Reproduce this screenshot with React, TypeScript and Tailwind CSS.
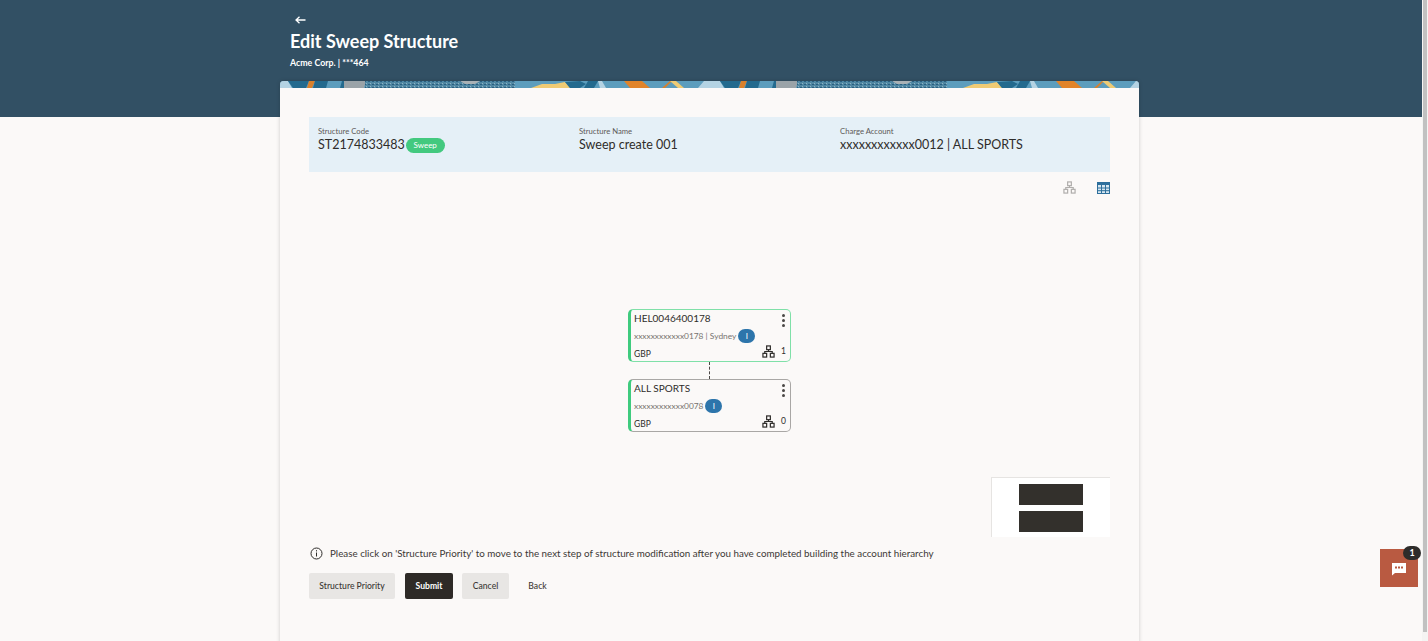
const font = { fontFamily: 'Lato, "Noto Sans", sans-serif' };

function Strip() {
  return (
    <svg className="block w-full h-[7px]" viewBox="0 0 859 7" preserveAspectRatio="none">
      <defs>
        <pattern id="dots" width="4" height="3" patternUnits="userSpaceOnUse">
          <rect width="4" height="3" fill="#4f87a3" />
          <rect width="2" height="1" fill="#2a5f80" />
          <rect x="2" y="2" width="1" height="1" fill="#8fb4c4" />
        </pattern>
        <g id="tile">
          <polygon points="0,0 8,0 12,7 0,7" fill="#b4d3e3" />
          <polygon points="8,0 29,0 26,7 13,7" fill="#236a8e" />
          <polygon points="29,0 35,0 32,7 27,7" fill="#d9812c" />
          <polygon points="35,0 48,0 46,7 33,7" fill="#236a8e" />
          <polygon points="62,0 65,0 64,7 60,7" fill="#236a8e" />
          <polygon points="64,0 86,0 84,7 64,7" fill="#9aa3a8" />
          <rect x="85" y="0" width="150" height="7" fill="url(#dots)" />
          <polygon points="180,0 200,0 195,3 185,3" fill="#a9b1b5" />
          <polygon points="251,7 262,3 275,3 285,1 290,7" fill="#efcb74" />
          <polygon points="285,1 300,0 306,3 300,7 290,7" fill="#236a8e" />
          <polygon points="308,0 318,0 314,7 304,7" fill="#236a8e" />
          <polygon points="318,0 322,0 326,7 320,7" fill="#b4d3e3" />
          <polygon points="344,0 362,0 370,7 350,7" fill="#e1842a" />
          <polygon points="382,7 390,0 392,0 385,7" fill="#d9812c" />
          <polygon points="390,0 396,0 404,7 398,7" fill="#efcb74" />
          <polygon points="418,7 424,0 432,0 432,7" fill="#b4d3e3" />
        </g>
      </defs>
      <rect width="859" height="7" fill="#5c9dbd" />
      <use href="#tile" />
      <use href="#tile" x="432" />
    </svg>
  );
}

function TreeIcon({ className }: { className?: string }) {
  return (
    <svg className={className} viewBox="0 0 14 14" fill="none" stroke="currentColor" strokeWidth="1.3">
      <rect x="5" y="1" width="4" height="4" />
      <rect x="1" y="9" width="4" height="4" />
      <rect x="9" y="9" width="4" height="4" />
      <path d="M7 5v2M3 9V7h8v2" />
    </svg>
  );
}

function TableIcon() {
  return (
    <svg className="w-[13px] h-[12px] text-[#2d6f9c]" viewBox="0 0 13 12">
      <rect x="0.5" y="0.5" width="12" height="11" fill="#d6e6f0" stroke="currentColor" />
      <rect x="0.5" y="0.5" width="12" height="2.5" fill="currentColor" />
      <path d="M4.5 3v8M8.5 3v8M1 6h11M1 8.7h11" stroke="currentColor" strokeWidth="1" />
    </svg>
  );
}

function Node({ title, account, count, active }: { title: string; account: string; count: number; active?: boolean }) {
  return (
    <div className={`relative w-[163px] h-[53px] rounded-[5px] border border-l-[3px] border-l-[#3fcb7e] pl-[3px] ${active ? 'border-[#7fe0a8]' : 'border-[#a9a7a5]'}`}>
      <div className="text-[10px] leading-[14px] mt-[1px] text-[#2e2c2a]">{title}</div>
      <div className="flex items-center mt-[3px] h-[16px]">
        <span className="text-[8.4px] text-[#77736f] whitespace-nowrap">{account}</span>
        <span className="ml-[2px] shrink-0 w-[17px] h-[14px] rounded-full bg-[#2d75ab] text-white text-[8px] leading-[14px] text-center">I</span>
      </div>
      <div className="text-[8.5px] leading-[12px] mt-[4px] text-[#2e2c2a]">GBP</div>
      <div className="absolute right-[5px] top-[4px] flex flex-col gap-[2px]">
        <span className="w-[3px] h-[3px] bg-[#4a4745] rounded-full" />
        <span className="w-[3px] h-[3px] bg-[#4a4745] rounded-full" />
        <span className="w-[3px] h-[3px] bg-[#4a4745] rounded-full" />
      </div>
      <div className="absolute right-[4px] bottom-[3px] flex items-center gap-[6px] text-[#2e2c2a]">
        <TreeIcon className="w-[13px] h-[13px]" />
        <span className="text-[8.5px]">{count}</span>
      </div>
    </div>
  );
}

export default function App() {
  return (
    <div className="relative w-[1428px] h-[641px] overflow-hidden bg-[#fbf9f8] text-[#2e2c2a]" style={font}>
      <div className="h-[117px] w-[1422px] bg-[#325064] text-white pl-[290px] pt-[13px]">
        <svg className="w-[11px] h-[14px] ml-[5px]" viewBox="0 0 11 14" fill="none" stroke="white" strokeWidth="1.3">
          <path d="M10.5 7H1M4.5 3.7 1 7l3.5 3.3" />
        </svg>
        <h1 className="text-[18px] leading-[22px] font-bold mt-[3px]">Edit Sweep Structure</h1>
        <p className="text-[8.8px] leading-[12px] font-bold mt-[5px]">Acme Corp. | ***464</p>
      </div>

      <div className="w-[859px] h-[600px] ml-[280px] -mt-[36px] bg-[#fbf9f8] rounded-t-[4px] overflow-hidden shadow-[0_0_4px_rgba(0,0,0,0.18)]">
        <Strip />
        <div className="px-[29px] pt-[29px]">
          <div className="h-[55px] bg-[#e5f0f7] flex pl-[9px] pt-[9px]">
            <div className="w-[261px]">
              <div className="text-[7.7px] leading-[11px] text-[#5d5a57]">Structure Code</div>
              <div className="flex items-center h-[17px]">
                <span className="text-[12.5px] text-[#2e2c2a]">ST2174833483</span>
                <span className="ml-[1px] w-[39px] h-[15px] rounded-full bg-[#43c97f] text-white text-[8px] leading-[15px] text-center">Sweep</span>
              </div>
            </div>
            <div className="w-[261px]">
              <div className="text-[7.7px] leading-[11px] text-[#5d5a57]">Structure Name</div>
              <div className="text-[12.5px] leading-[16px]">Sweep create 001</div>
            </div>
            <div>
              <div className="text-[7.7px] leading-[11px] text-[#5d5a57]">Charge Account</div>
              <div className="text-[12.5px] leading-[16px]">xxxxxxxxxxxx0012 | ALL SPORTS</div>
            </div>
          </div>

          <div className="flex justify-end items-center gap-[21px] mt-[9px] h-[13px]">
            <TreeIcon className="w-[13px] h-[13px] text-[#b0aeac]" />
            <TableIcon />
          </div>

          <div className="flex flex-col items-center mt-[115px]">
            <Node active title="HEL0046400178" account="xxxxxxxxxxxx0178 | Sydney" count={1} />
            <div className="h-[17px] border-l border-dashed border-[#4a4745]" />
            <Node title="ALL SPORTS" account="xxxxxxxxxxxx0078" count={0} />
          </div>

          <div className="flex justify-end mt-[45px]">
            <div className="w-[119px] h-[60px] bg-white border-t border-l border-[#e6e4e2] flex flex-col items-center pt-[6px] gap-[6px]">
              <div className="w-[64px] h-[21px] bg-[#33302c]" />
              <div className="w-[64px] h-[21px] bg-[#33302c]" />
            </div>
          </div>

          <div className="flex items-center mt-[8px] h-[16px] text-[9.8px] text-[#3b3835]">
            <svg className="w-[13px] h-[13px] ml-[1px] mr-[7px]" viewBox="0 0 13 13" fill="none" stroke="#2e2c2a">
              <circle cx="6.5" cy="6.5" r="5.5" />
              <path d="M6.5 5.5v4M6.5 3.2v1.2" />
            </svg>
            Please click on 'Structure Priority' to move to the next step of structure modification after you have completed building the account hierarchy
          </div>

          <div className="flex items-center mt-[12px] text-[8.6px] font-medium">
            <button className="w-[86px] h-[26px] pt-[1px] rounded-[2px] bg-[#e8e6e4] text-[#3b3835]">Structure Priority</button>
            <button className="w-[48px] h-[26px] pt-[1px] ml-[10px] rounded-[2px] bg-[#2e2a27] text-white font-bold">Submit</button>
            <button className="w-[47px] h-[26px] pt-[1px] ml-[9px] rounded-[2px] bg-[#e8e6e4] text-[#3b3835]">Cancel</button>
            <button className="w-[47px] h-[26px] pt-[1px] ml-[5px] text-[#3b3835]">Back</button>
          </div>
        </div>
      </div>

      <div className="absolute right-[10px] top-[549px] w-[38px] h-[38px] bg-[#b95a41] flex items-center justify-center">
        <svg className="w-[16px] h-[14px] mt-[1px]" viewBox="0 0 16 14">
          <path d="M1 1h14v10H4l-3 2.5z" fill="white" />
          <rect x="4" y="4.5" width="2" height="2" fill="#b95a41" />
          <rect x="7" y="4.5" width="2" height="2" fill="#b95a41" />
          <rect x="10" y="4.5" width="2" height="2" fill="#b95a41" />
        </svg>
        <span className="absolute -top-[3px] -right-[3px] w-[18px] h-[14px] rounded-full bg-[#2e2c2a] text-white text-[9px] leading-[14px] font-bold text-center">1</span>
      </div>

      <div className="absolute right-0 top-0 bottom-0 w-[6px] bg-[#f5f4f3]">
        <div className="w-[4px] h-[632px] ml-[1px] bg-[#c1c1c1]" />
      </div>
    </div>
  );
}
